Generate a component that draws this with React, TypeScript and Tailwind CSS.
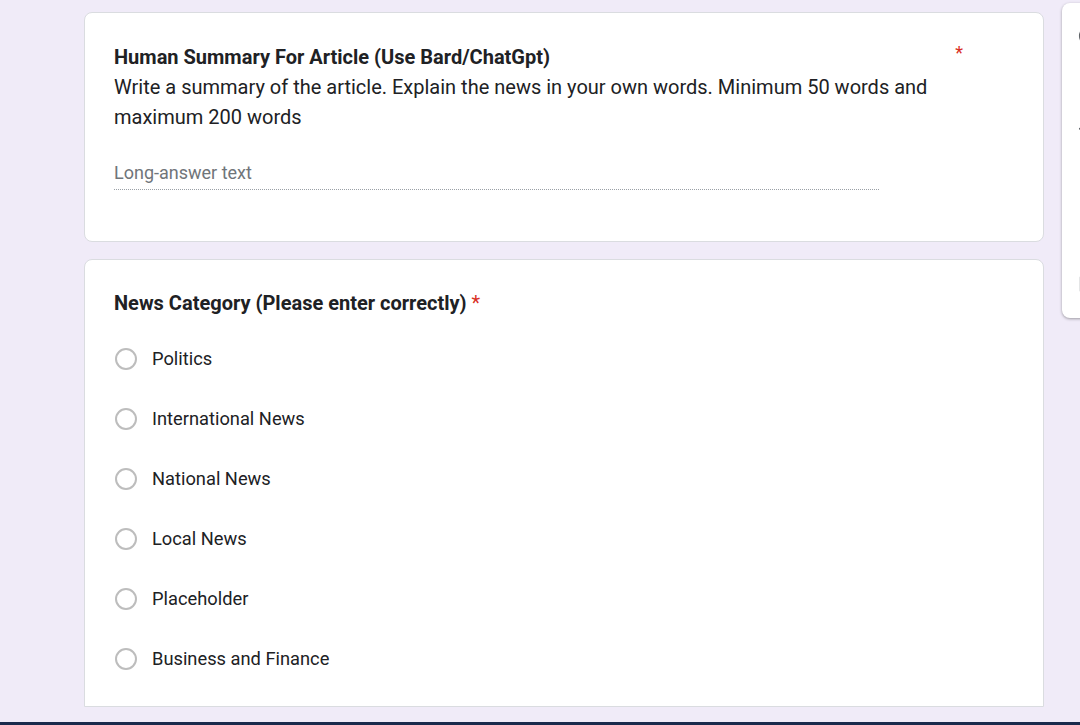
import React from "react";
import { CirclePlus, FileInput, Type, Image } from "lucide-react";

const options = [
  "Politics",
  "International News",
  "National News",
  "Local News",
  "Placeholder",
  "Business and Finance",
];

const Radio = ({ label }: { label: string }) => (
  <div className="flex items-center h-[60px] pl-[1px]">
    <span className="w-[22px] h-[22px] rounded-full border-2 border-[#bdbdbd] shrink-0" />
    <span className="ml-[15px] text-[18.3px] text-[#202124]">{label}</span>
  </div>
);

const App = () => {
  return (
    <div
      className="w-[1080px] h-[725px] bg-[#f0ebf8] overflow-hidden flex flex-col"
      style={{ fontFamily: "Roboto, 'Liberation Sans', sans-serif" }}
    >
      <div className="h-[707px] overflow-hidden flex">
        <div className="ml-[84px] w-[960px] pt-[12px] flex flex-col gap-[17px] shrink-0">
          <div className="bg-white border border-[#dadce0] rounded-lg pl-[29px] pt-[32px] pb-[51px]">
            <div className="flex w-[850px]">
              <h2 className="flex-1 text-[20px] leading-[24px] font-bold text-[#202124]">
                Human Summary For Article (Use Bard/ChatGpt)
              </h2>
              <span className="text-[#d93025] text-[18px] leading-[16px] mr-[1px]">*</span>
            </div>
            <p className="mt-[3px] w-[835px] text-[20px] leading-[30px] text-[#202124]">
              Write a summary of the article. Explain the news in your own words. Minimum 50 words and
              maximum 200 words
            </p>
            <div className="mt-[29px] w-[765px] border-b border-dotted border-[#9aa0a6] pb-[4px] text-[18px] leading-[24px] text-[#70757a]">
              Long-answer text
            </div>
          </div>

          <div className="bg-white border border-[#dadce0] rounded-t-lg pl-[29px] pt-[31px] flex-1">
            <h2 className="text-[20px] leading-[24px] font-bold text-[#202124]">
              News Category (Please enter correctly)
              <span className="ml-[5px] font-normal text-[#d93025]">*</span>
            </h2>
            <div className="mt-[14px] flex flex-col">
              {options.map((o) => (
                <Radio key={o} label={o} />
              ))}
            </div>
          </div>
        </div>

        <div className="ml-[18px] mt-[3px] w-[60px] h-[315px] bg-white rounded-lg shadow-[0_1px_3px_rgba(0,0,0,0.35)] shrink-0 relative">
          <div className="absolute left-[16px] top-[22px] text-[#5f6368]">
            <CirclePlus size={22} strokeWidth={2} />
          </div>
          <div className="absolute left-[16px] top-[112px] text-[#5f6368]">
            <FileInput size={22} strokeWidth={2} />
          </div>
          <div className="absolute left-[16px] top-[223px] text-[#5f6368]">
            <Type size={22} strokeWidth={2.5} />
          </div>
          <div className="absolute left-[16px] top-[270px] text-[#5f6368]">
            <Image size={22} strokeWidth={2} />
          </div>
        </div>
      </div>
      <div className="h-[15px]" />
      <div className="h-[3px] bg-[#1a2a4c]" />
    </div>
  );
};

export default App;
